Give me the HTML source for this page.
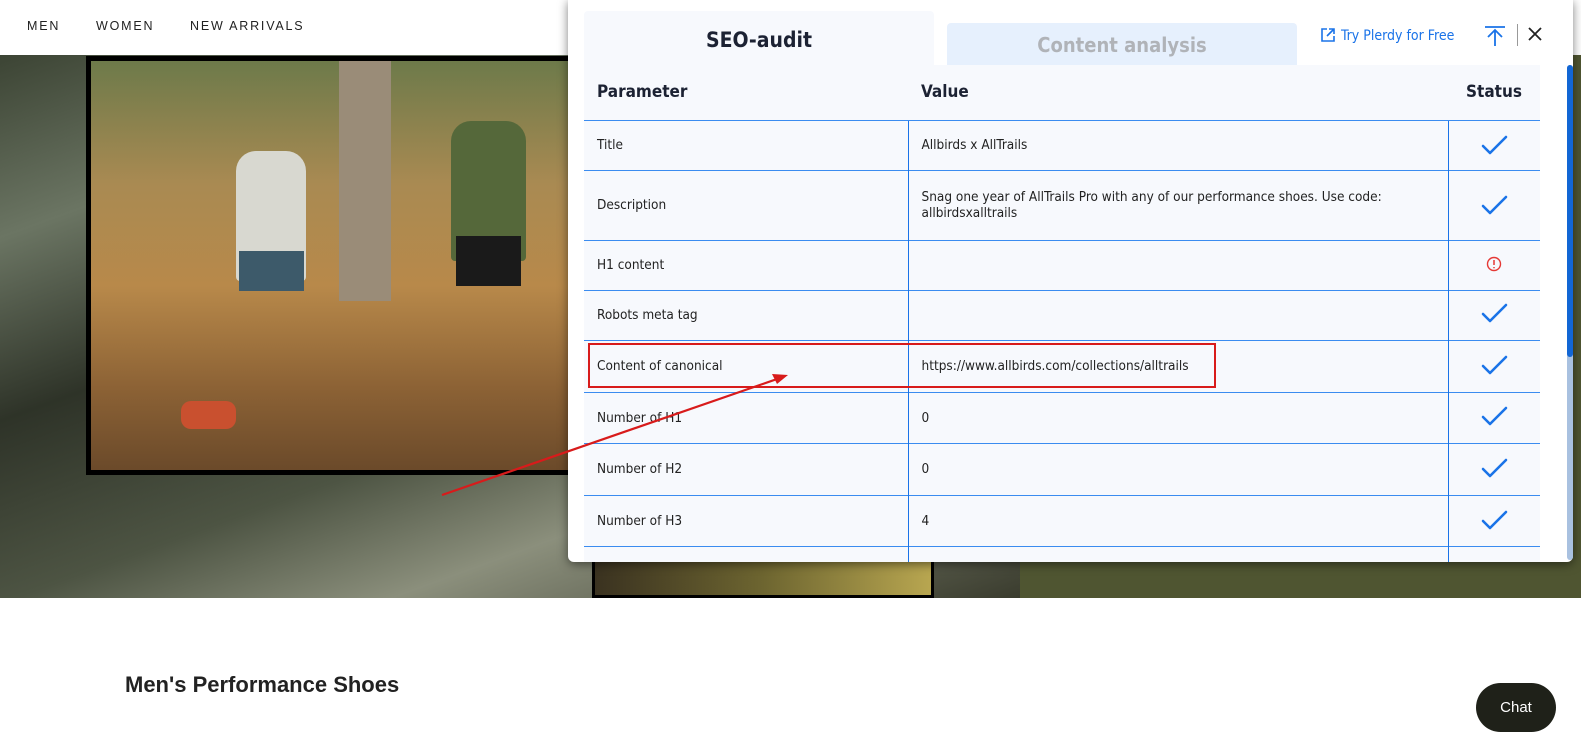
<!DOCTYPE html>
<html><head><meta charset="utf-8"><style>
*{margin:0;padding:0;box-sizing:border-box}
body{width:1581px;height:750px;overflow:hidden;background:#fff;font-family:"Liberation Sans",sans-serif;position:relative}
.nav{position:absolute;top:19px;font-size:12.5px;letter-spacing:1.8px;color:#222}
.hero{position:absolute;left:0;top:55px;width:1020px;height:543px;background:linear-gradient(160deg,#3c4434 0%,#6b7563 20%,#2e3328 40%,#4d5443 60%,#8b8f7c 75%,#3a3c2e 100%)}
.olive{position:absolute;left:1020px;top:55px;width:561px;height:543px;background:#4f5531}
.photo{position:absolute;left:86px;top:56px;width:500px;height:419px;background:#000;padding:5px}
.photo .bg{position:relative;width:100%;height:100%;overflow:hidden;background:linear-gradient(180deg,#6d7a4a 0%,#a98a52 30%,#b8894a 55%,#8c6235 80%,#6b4a2a 100%)}
.photo2{position:absolute;left:592px;top:540px;width:342px;height:58px;background:#000;padding:0 3px 3px}
.photo2 div{width:100%;height:100%;background:linear-gradient(90deg,#3a3220,#6d6530,#b8a650)}
.panel{position:absolute;left:568px;top:0;width:1005px;height:562px;background:#fff;border-radius:0 0 6px 6px;box-shadow:0 2px 10px rgba(0,0,0,.5)}
.tab1{position:absolute;left:16px;top:11px;width:350px;height:60px;background:#f7f9fd;border-radius:4px 4px 0 0;text-align:center;font:bold 21px "DejaVu Sans Condensed","Liberation Sans",sans-serif;color:#1c2233;padding-top:17px}
.tab2{position:absolute;left:379px;top:23px;width:350px;height:43px;background:#e6f0fd;border-radius:4px 4px 0 0;text-align:center;font:bold 20px "DejaVu Sans Condensed","Liberation Sans",sans-serif;color:#b0b3b8;padding-top:10px}
.try{position:absolute;left:752px;top:27px;color:#1a73e8;font:14px "DejaVu Sans Condensed","Liberation Sans",sans-serif}
table{position:absolute;left:16px;top:65px;width:956px;border-collapse:collapse;background:#f7f9fd;font:13.5px "DejaVu Sans Condensed","Liberation Sans",sans-serif;color:#222}
td,th{border-top:1.5px solid #3b8cf0;padding:0 13px;text-align:left;vertical-align:middle}
th{font:bold 17px "DejaVu Sans Condensed","Liberation Sans",sans-serif;border-top:none;height:55px;color:#1c2233}
td+td{border-left:1px solid #1a73e8}
td.s{text-align:center;padding:0}
.sb{position:absolute;left:999px;top:65px;width:6px;height:495px;background:#a9c1e0;border-radius:3px}
.sb div{height:292px;background:#1266d4;border-radius:3px}
.chat{position:absolute;left:1476px;top:683px;width:80px;height:49px;border-radius:25px;background:#1f2119;color:#fff;font-size:15px;text-align:center;line-height:49px}
</style></head><body>
<div class="nav" style="left:27px">MEN</div>
<div class="nav" style="left:96px">WOMEN</div>
<div class="nav" style="left:190px">NEW ARRIVALS</div>
<div class="hero"></div><div class="olive"></div>
<div class="photo"><div class="bg">
<div style="position:absolute;left:248px;top:0;width:52px;height:240px;background:#9a8c78"></div>
<div style="position:absolute;left:145px;top:90px;width:70px;height:130px;background:#d8d8d0;border-radius:20px 20px 4px 4px"></div>
<div style="position:absolute;left:148px;top:190px;width:65px;height:40px;background:#3d5a6a"></div>
<div style="position:absolute;left:360px;top:60px;width:75px;height:140px;background:#55683a;border-radius:20px 20px 4px 4px"></div>
<div style="position:absolute;left:365px;top:175px;width:65px;height:50px;background:#1a1a1a"></div>
<div style="position:absolute;left:90px;top:340px;width:55px;height:28px;background:#c9502f;border-radius:10px"></div>
</div></div>
<div class="photo2"><div></div></div>
<div style="position:absolute;left:125px;top:672px;font:bold 22px 'Liberation Sans',sans-serif;color:#222">Men's Performance Shoes</div>
<div class="chat">Chat</div>
<div class="panel">
<div class="tab1">SEO-audit</div>
<div class="tab2">Content analysis</div>
<div class="try"><svg width="16" height="16" viewBox="0 0 16 16" style="vertical-align:-3px;margin-right:5px"><path d="M7 2H2v12h12V9M9 2h5v5M14 2L7 9" fill="none" stroke="#1a73e8" stroke-width="1.6"/></svg>Try Plerdy for Free</div>
<svg style="position:absolute;left:915px;top:25px" width="24" height="22" viewBox="0 0 24 22"><path d="M2 2h20M12 21V6M5 12l7-7 7 7" fill="none" stroke="#1a73e8" stroke-width="1.8"/></svg>
<div style="position:absolute;left:949px;top:24px;width:1px;height:22px;background:#999"></div>
<svg style="position:absolute;left:959px;top:26px" width="16" height="16" viewBox="0 0 16 16"><path d="M2 2l12 12M14 2L2 14" stroke="#222" stroke-width="1.8"/></svg>
<table>
<tr><th style="width:324px">Parameter</th><th style="width:540px">Value</th><th style="text-align:center">Status</th></tr>
<tr style="height:50px"><td>Title</td><td>Allbirds x AllTrails</td><td class="s">✓</td></tr>
<tr style="height:70px"><td>Description</td><td>Snag one year of AllTrails Pro with any of our performance shoes. Use code: allbirdsxalltrails</td><td class="s">✓</td></tr>
<tr style="height:50px"><td>H1 content</td><td></td><td class="s">!</td></tr>
<tr style="height:50px"><td>Robots meta tag</td><td></td><td class="s">✓</td></tr>
<tr style="height:52px"><td>Content of canonical</td><td>https://www.allbirds.com/collections/alltrails</td><td class="s">✓</td></tr>
<tr style="height:51px"><td>Number of H1</td><td>0</td><td class="s">✓</td></tr>
<tr style="height:52px"><td>Number of H2</td><td>0</td><td class="s">✓</td></tr>
<tr style="height:51px"><td>Number of H3</td><td>4</td><td class="s">✓</td></tr>
<tr style="height:16px"><td></td><td></td><td></td></tr>
</table>
<div class="sb"><div></div></div>
</div>
<svg style="position:absolute;left:0;top:0" width="1581" height="750">
<defs><g id="ck"><path d="M-11 1l7 7L12-8" fill="none" stroke="#1a73e8" stroke-width="2.6" stroke-linecap="round" stroke-linejoin="round"/></g></defs>
<rect x="1450" y="128" width="88" height="28" fill="#f7f9fd"/><use href="#ck" x="1494" y="145"/>
<rect x="1450" y="190" width="88" height="30" fill="#f7f9fd"/><use href="#ck" x="1494" y="205"/>
<rect x="1450" y="250" width="88" height="28" fill="#f7f9fd"/><circle cx="1494" cy="264" r="6.5" fill="none" stroke="#e53935" stroke-width="1.4"/><path d="M1494 260v5M1494 267v1.2" stroke="#e53935" stroke-width="1.5"/>
<rect x="1450" y="300" width="88" height="28" fill="#f7f9fd"/><use href="#ck" x="1494" y="313"/>
<rect x="1450" y="350" width="88" height="30" fill="#f7f9fd"/><use href="#ck" x="1494" y="365"/>
<rect x="1450" y="402" width="88" height="30" fill="#f7f9fd"/><use href="#ck" x="1494" y="416"/>
<rect x="1450" y="453" width="88" height="30" fill="#f7f9fd"/><use href="#ck" x="1494" y="468"/>
<rect x="1450" y="505" width="88" height="30" fill="#f7f9fd"/><use href="#ck" x="1494" y="520"/>
<rect x="589" y="344" width="626" height="43" fill="none" stroke="#d81b1b" stroke-width="2"/>
<path d="M442 495L780 378" stroke="#d81b1b" stroke-width="2.2"/><path d="M788 375l-16-1 5 10z" fill="#d81b1b"/>
</svg>
</body></html>
